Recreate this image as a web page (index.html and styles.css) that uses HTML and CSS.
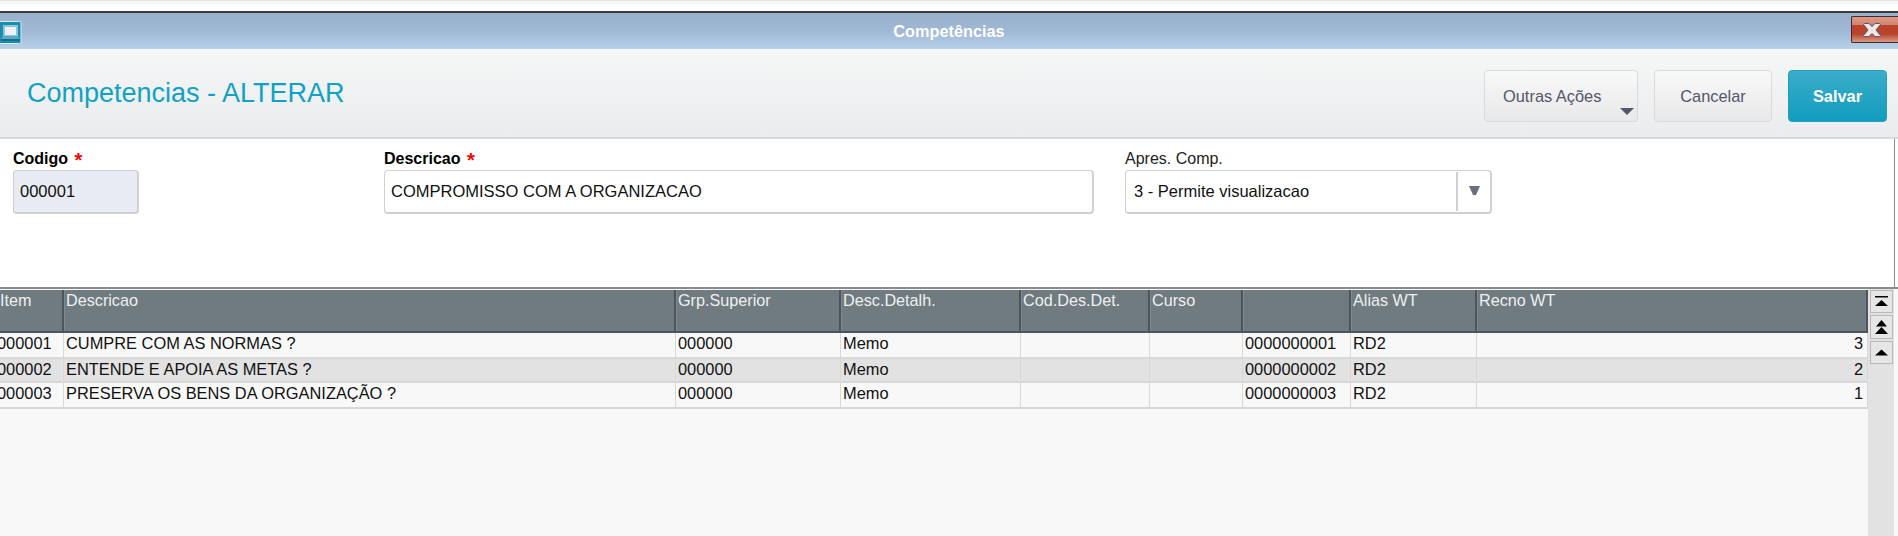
FILE: index.html
```html
<!DOCTYPE html>
<html lang="pt">
<head>
<meta charset="utf-8">
<title>Competências</title>
<link rel="stylesheet" href="styles.css">
</head>
<body>
<div class="topstrip"></div>
<div class="window">
  <div class="titlebar">
    <svg class="appicon" width="22" height="23" viewBox="0 0 22 23"><rect x="-4" y="0.5" width="25" height="22" rx="1.500" fill="#1a8db2" stroke="#dfe9f2"/><rect x="3" y="4" width="15" height="11" fill="#8fc3d6"/><rect x="5" y="6" width="11" height="8" fill="#eef2f4"/><path d="M3 15h15l2 3H1z" fill="#5fa7c0"/><path d="M1 18h19v2H1z" fill="#12708f"/></svg>
    <span class="titletext">Competências</span>
    <div class="closebtn"><svg width="20" height="16" viewBox="0 0 20 16"><path d="M2.500 1.500h4.500L10 4.500l3-3h4.500l1 1L14 8l4.500 5.500-1 1H13l-3-3-3 3H2.500l-1-1L6 8 1.500 2.500z" fill="#e9e9e9" stroke="#5a5560" stroke-width="1"/></svg></div>
  </div>
  <div class="pagehead">
    <h1 class="pagetitle">Competencias - ALTERAR</h1>
    <div class="actions">
      <button class="btn btn-more">Outras Ações<span class="caret"></span></button>
      <button class="btn btn-cancel">Cancelar</button>
      <button class="btn btn-save">Salvar</button>
    </div>
  </div>
  <div class="form">
    <div class="field f-code">
      <label class="lbl req">Codigo <em>*</em></label>
      <div class="input readonly">000001</div>
    </div>
    <div class="field f-desc">
      <label class="lbl req">Descricao <em>*</em></label>
      <div class="input">COMPROMISSO COM A ORGANIZACAO</div>
    </div>
    <div class="field f-apres">
      <label class="lbl">Apres. Comp.</label>
      <div class="input select"><span class="seltext">3 - Permite visualizacao</span><span class="selbtn"><svg width="11" height="9" viewBox="0 0 11 9"><path d="M0 0h11L7 9H4z" fill="#6a7080"/></svg></span></div>
    </div>
  </div>
  <div class="gridwrap">
    <div class="grid">
      <div class="row head">
        <div class="c c1">Item</div><div class="c c2">Descricao</div><div class="c c3">Grp.Superior</div><div class="c c4">Desc.Detalh.</div><div class="c c5">Cod.Des.Det.</div><div class="c c6">Curso</div><div class="c c7"></div><div class="c c8">Alias WT</div><div class="c c9">Recno WT</div>
      </div>
      <div class="row r1">
        <div class="c c1">000001</div><div class="c c2">CUMPRE COM AS NORMAS ?</div><div class="c c3">000000</div><div class="c c4">Memo</div><div class="c c5"></div><div class="c c6"></div><div class="c c7">0000000001</div><div class="c c8">RD2</div><div class="c c9 num">3</div>
      </div>
      <div class="row r2">
        <div class="c c1">000002</div><div class="c c2">ENTENDE E APOIA AS METAS ?</div><div class="c c3">000000</div><div class="c c4">Memo</div><div class="c c5"></div><div class="c c6"></div><div class="c c7">0000000002</div><div class="c c8">RD2</div><div class="c c9 num">2</div>
      </div>
      <div class="row r3">
        <div class="c c1">000003</div><div class="c c2">PRESERVA OS BENS DA ORGANIZAÇÃO ?</div><div class="c c3">000000</div><div class="c c4">Memo</div><div class="c c5"></div><div class="c c6"></div><div class="c c7">0000000003</div><div class="c c8">RD2</div><div class="c c9 num">1</div>
      </div>
    </div>
    <div class="scroll">
      <div class="sbtn"><svg width="15" height="13" viewBox="0 0 15 13"><path d="M1 1h13v1.500H1zM7.500 5l6.500 6H1z" fill="#000"/></svg></div>
      <div class="sbtn sbtn-tall"><svg width="15" height="16" viewBox="0 0 15 16"><path d="M7.500 1l5.500 6.500H2zM7.500 8l6.500 7H1z" fill="#000"/></svg></div>
      <div class="sbtn"><svg width="15" height="9" viewBox="0 0 15 9"><path d="M7.500 1.500l6.500 6H1z" fill="#000"/></svg></div>
    </div>
  </div>
</div>
</body>
</html>
```
FILE: styles.css
```css
* { box-sizing: border-box; }
html, body { margin: 0; padding: 0; }
body { width: 1898px; height: 536px; overflow: hidden; background: #fff; font-family: "Liberation Sans", Arial, sans-serif; font-size: 16px; color: #111; }
.topstrip { height: 11px; background: linear-gradient(#e3e5e7 0, #e3e5e7 1px, #f5f6f6 1px, #f5f6f6 4px, #fff 4px); }
.window { border-top: 2px solid #3a3a3a; height: 525px; display: flex; flex-direction: column; }
.titlebar { height: 36px; flex: none; background: linear-gradient(#9ab1cd, #9fb8d4 50%, #b7d0ea); display: grid; grid-template-columns: 1fr auto 1fr; align-items: center; }
.appicon { margin-top: 2px; display: block; }
.titletext { color: #fff; font-weight: bold; font-size: 16.300px; }
.closebtn { justify-self: end; width: 47px; height: 27px; margin-top: -3px; border: 1px solid #4a2630; border-right: 0; border-radius: 2px 0 0 2px; background: linear-gradient(#dd9a88, #cf8670 30%, #b9432a 32%, #b9432a 68%, #c9735c 85%, #d99b8a); display: flex; align-items: center; justify-content: center; padding-right: 6px; }
.closebtn svg { display: block; }
.pagehead { height: 90px; flex: none; border-bottom: 2px solid #d8d9da; background: linear-gradient(#f5f6f6, #ebecee); display: flex; align-items: flex-start; justify-content: space-between; padding: 28px 11px 0 27px; }
.pagetitle { margin: 0; font-size: 27px; font-weight: normal; color: #10a2c6; line-height: 32px; }
.actions { display: flex; gap: 16px; margin-top: -7px; }
.btn { height: 52px; border-radius: 4px; font-family: inherit; font-size: 16.400px; padding: 0; position: relative; }
.btn-more, .btn-cancel { border: 1px solid #dadada; background: linear-gradient(#f9f9f9, #e8e8e8); color: #54566a; }
.btn-more { width: 154px; text-align: left; padding-left: 18px; }
.btn-cancel { width: 118px; }
.btn-save { width: 99px; border: 1px solid #1f9fc1; background: linear-gradient(#3bacc9, #129cbf); color: #fff; font-weight: bold; }
.caret { position: absolute; right: 3px; bottom: 6px; border-left: 7px solid transparent; border-right: 7px solid transparent; border-top: 7px solid #54566a; }
.form { height: 148px; flex: none; background: #fff; display: flex; border-right: 1px solid #8a8a8a; margin-right: 3px; padding: 11px 0 0 13px; }
.field { display: flex; flex-direction: column; }
.f-code { width: 371px; }
.f-desc { width: 741px; }
.lbl { height: 18px; line-height: 18px; font-size: 16px; color: #222; }
.lbl.req { font-weight: bold; color: #000; }
.lbl em { color: #f00; font-style: normal; font-size: 20px; line-height: 0; margin-left: 2px; vertical-align: -3px; }
.input { margin-top: 2px; height: 44px; border: 2px solid #d0d0d0; border-radius: 4px; padding: 0 6px; line-height: 41px; font-size: 16.500px; color: #111; background: #fff; border-top-width: 1px; border-left-width: 1px; }
.f-code .input { width: 126px; background: #e8ebf3; }
.f-desc .input { width: 710px; }
.f-apres .input { width: 367px; }
.select { display: flex; padding: 0 0 0 8px; }
.seltext { flex: 1; }
.selbtn { width: 34px; border-left: 2px solid #d0d0d0; margin: 1px 0; display: flex; justify-content: center; align-items: center; padding-bottom: 3px; }
.gridwrap { flex: 1; background: #f8f8f8; border-top: 2px solid #8a8a8a; display: flex; overflow: hidden; padding-right: 4px; }
.grid { width: 1871px; margin-left: -3px; flex: none; }
.row { display: flex; border-bottom: 2px solid #d8d8d8; font-size: 16.400px; }
.head { height: 43px; margin-top: 1px; background: #6f7b80; border-bottom: 2px solid #4d5558; font-size: 16.200px; }
.r1 { height: 26px; background: #f8f8f8; }
.r2 { height: 24px; background: #e2e2e2; }
.r3 { height: 26px; background: #f8f8f8; }
.c { flex: none; padding: 0 2px; line-height: 21px; color: #111; border-right: 1px solid #d8d8d8; white-space: nowrap; overflow: hidden; }
.r2 .c { line-height: 20px; }
.head .c { color: #eef0f0; border-right: 2px solid #4d5558; box-shadow: inset 1px 0 0 #7f8b90; line-height: 18px; padding-top: 1px; }
.c1 { width: 67px; padding-left: 0; }
.head .c1 { padding-left: 3px; }
.c2 { width: 612px; }
.c3 { width: 165px; }
.c4 { width: 180px; }
.c5 { width: 129px; }
.c6 { width: 93px; }
.c7 { width: 108px; }
.c8 { width: 126px; }
.c9 { width: 391px; }
.num { text-align: right; padding-right: 4px; }
.scroll { width: 26px; flex: none; background: #e2e2e2; padding: 1px 1px 0 2px; display: flex; flex-direction: column; gap: 2px; }
.sbtn { width: 23px; height: 23px; border: 1px solid #b8b8b8; background: #e6e6e6; display: flex; align-items: center; justify-content: center; }
.sbtn-tall { height: 24px; }
```
